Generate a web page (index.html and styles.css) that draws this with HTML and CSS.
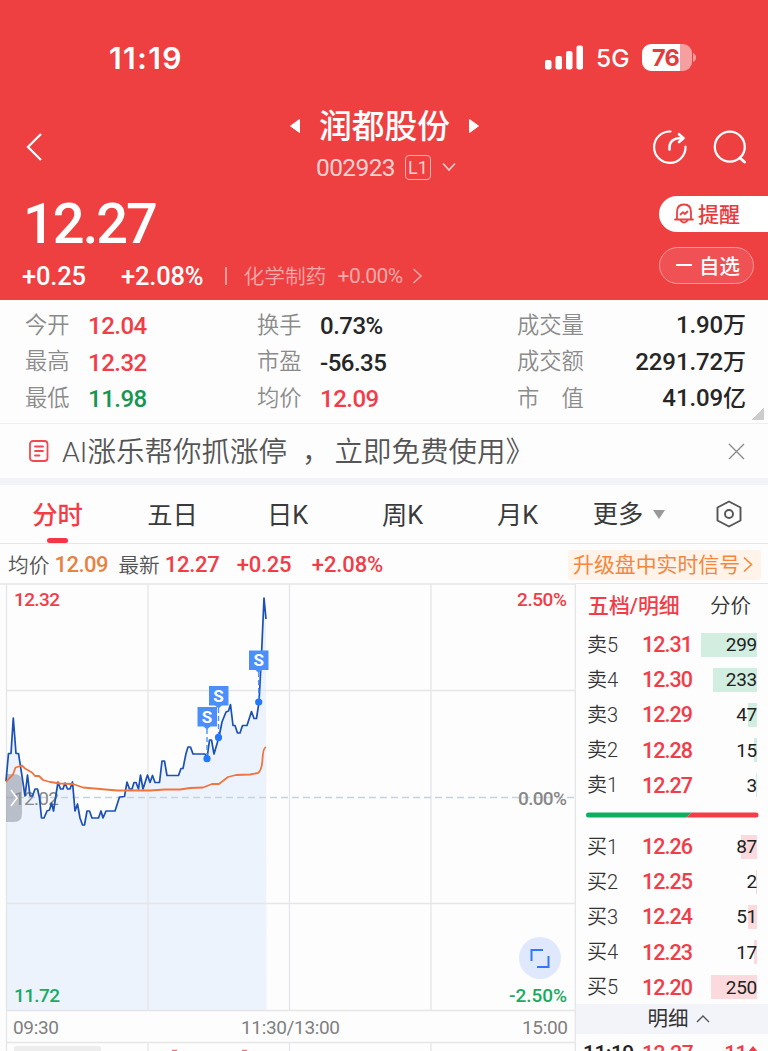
FILE: index.html
```html
<!DOCTYPE html>
<html lang="zh-CN">
<head>
<meta charset="utf-8">
<title>润都股份 002923</title>
<link rel="stylesheet" href="styles.css">
</head>
<body>
<div class="app">
  <header class="header">
    <div class="status">
      <span class="clock">11:19</span>
      <div class="status-right">
        <svg class="signal" width="38" height="25" viewBox="0 0 38 25" fill="#fff"><rect x="0" y="15" width="6.5" height="9.5" rx="2"/><rect x="10.5" y="11" width="6.5" height="13.5" rx="2"/><rect x="21" y="6" width="6.5" height="18.5" rx="2"/><rect x="31.5" y="0.500" width="6.500" height="24" rx="2"/></svg>
        <span class="net">5G</span>
        <span class="battery">76</span>
        <svg class="cap" width="3" height="9" viewBox="0 0 3 9"><path d="M0 0Q3 1.500 3 4.500T0 9Z" fill="#f59fa0"/></svg>
      </div>
    </div>
    <div class="nav">
      <svg class="back" width="18" height="30" viewBox="0 0 18 30"><path d="M16 2 3 15 16 28" fill="none" stroke="#fff" stroke-width="2.300"/></svg>
      <div class="title">
        <div class="name-row">
          <svg width="12" height="16" viewBox="0 0 12 16"><path d="M10.500 1.500v13L1.500 8Z" fill="#fff" stroke="#fff" stroke-linejoin="round"/></svg>
          <h1 class="name">润都股份</h1>
          <svg width="12" height="16" viewBox="0 0 12 16"><path d="M1.500 1.500v13L10.500 8Z" fill="#fff" stroke="#fff" stroke-linejoin="round"/></svg>
        </div>
        <div class="code-row">
          <span class="code">002923</span><span class="level">L1</span>
          <svg width="14" height="10" viewBox="0 0 14 10"><path d="M1 1.500 7 8 13 1.500" fill="none" stroke="#fbd0d0" stroke-width="1.600"/></svg>
        </div>
      </div>
      <div class="nav-icons">
        <svg width="36" height="36" viewBox="0 0 36 36" fill="none" stroke="#fff" stroke-width="2.200" stroke-linecap="round" stroke-linejoin="round"><path d="M18.500 2.500A15.700 15.700 0 1 0 33.500 17.500"/><path stroke-width="2.600" d="M17.500 20.500C17 12.500 21 9 30.500 9M27 5.200 31.500 9.200 27 13"/></svg>
        <svg width="36" height="36" viewBox="0 0 36 36" fill="none" stroke="#fff" stroke-width="2.300" stroke-linecap="round"><circle cx="17.800" cy="17.700" r="15"/><path stroke-width="3" d="m28 29 4.500 4"/></svg>
      </div>
    </div>
    <div class="quote">
      <div class="quote-main">
        <div class="price">12.27</div>
        <div class="change-row">
          <span class="chg">+0.25</span><span class="pct">+2.08%</span><i class="sep"></i>
          <span class="sector">化学制药</span><span class="sector-pct">+0.00%</span>
          <svg width="11" height="16" viewBox="0 0 11 16"><path d="m1.500 1 7.500 7-7.500 7" fill="none" stroke="#f8a8a8" stroke-width="1.500"/></svg>
        </div>
      </div>
      <div class="actions">
        <div class="remind">
          <svg width="20" height="21" viewBox="0 0 20 21" fill="none" stroke="#ee3f41" stroke-width="1.800" stroke-linejoin="round" stroke-linecap="round"><path d="M3 16V9Q3 1.500 10 1.500T17 9v7M1 16.500h18M6.500 17.500Q10 21.500 13.500 17.500M6.500 11.500l2.500-2.300 1.800 1.800 2.700-2.500"/></svg>提醒
        </div>
        <div class="watch"><i class="minus"></i>自选</div>
      </div>
    </div>
  </header>

  <section class="stats">
    <div class="stat"><span>今开</span><b class="red">12.04</b></div>
    <div class="stat"><span>换手</span><b>0.73%</b></div>
    <div class="stat wide"><span>成交量</span><b>1.90<em>万</em></b></div>
    <div class="stat"><span>最高</span><b class="red">12.32</b></div>
    <div class="stat"><span>市盈</span><b>-56.35</b></div>
    <div class="stat wide"><span>成交额</span><b>2291.72<em>万</em></b></div>
    <div class="stat"><span>最低</span><b class="green">11.98</b></div>
    <div class="stat"><span>均价</span><b class="red">12.09</b></div>
    <div class="stat wide"><span>市　值</span><b>41.09<em>亿</em></b></div>
    <i class="corner"></i>
  </section>

  <section class="promo">
    <svg width="20" height="22" viewBox="0 0 20 22" fill="none" stroke="#f2484f" stroke-width="1.800" stroke-linecap="round"><rect x="1" y="1" width="17.500" height="20" rx="3"/><path d="M6 6.500h8M6 11h8M6 15.500h4.500"/></svg>
    <span class="promo-text">AI涨乐帮你抓涨停<span class="comma">，</span>立即免费使用》</span>
    <svg width="17" height="17" viewBox="0 0 17 17"><path d="m1 1 15 15M16 1 1 16" stroke="#8c8c8c" stroke-width="1.400"/></svg>
  </section>

  <nav class="tabs">
    <span class="tab active">分时</span><span class="tab">五日</span><span class="tab">日K</span><span class="tab">周K</span><span class="tab">月K</span>
    <span class="tab more">更多<i class="caret"></i></span>
    <svg class="gear" width="26" height="28" viewBox="0 0 26 28" fill="none" stroke="#555" stroke-width="1.900" stroke-linejoin="round"><path d="M13 1.500 24.500 7.500v13L13 26.500 1.500 20.500v-13Z"/><circle cx="13" cy="14" r="4"/></svg>
  </nav>

  <div class="ticker">
    <span class="t-label">均价</span><span class="t-avg">12.09</span>
    <span class="t-label second">最新</span><span class="t-num">12.27</span><span class="t-num t-chg">+0.25</span><span class="t-num t-pct">+2.08%</span>
    <span class="upgrade">升级盘中实时信号<svg width="10" height="17" viewBox="0 0 10 17"><path d="m1 1.500 7.500 7L1 15.500" fill="none" stroke="#f6863c" stroke-width="1.600"/></svg></span>
  </div>

  <main class="market">
    <svg class="chart" width="576" height="468" viewBox="0 583 576 468">
      <path fill="#ecf3fd" d="M6 781 8.500 753.500H11L13.300 718 16 753.500H18.500L22 776 25 796 27.500 775 30 796H32.500L35 789H37.500L39.500 798 41.500 818H44L47 811 49.500 810 51.500 803 53.500 811 58 782 60.500 789H63L65 783 67.500 789H70L72.500 782 75 811 77.500 804 80 818 82.500 825H84.500L87 811H89.500L92 818H98.500L101 811 103 818 106 811H115L119.500 797 124.500 796.500 127 782 129.500 789H132L134 782.500H136L138.500 789 140.500 775 143 789 147.500 775 150 782.500 152.500 775.500 155 782.500H159.500L162 761H164.500L167 775.500H178.500L181 768.500H183L186 753.500 188 747H190.500L193 754H205L207 758.500 209.500 740H211.500L214 754 219 737 222 722 226 712 228.500 711 230.500 704.500 233 725.500H235L237.500 733H240L242.500 725.500H247L251.500 711.500 254 718.500H256.500L259 702 261.500 655 264 598 266 619 266.500 1010H6Z"/>
      <g stroke="#e5e6e8" stroke-width="1.300" fill="none"><path d="M0 584H768M6.500 584V1051M148 584V1010M289.500 584V1010M431 584V1010M6 690.500H575M6 903.500H575M6 1010.500H575M6 1042.500H575M148 1043V1051M289.500 1043V1051M431 1043V1051M575.300 584V1051"/></g>
      <path d="M6 797.500H575" stroke="#c7d3dc" stroke-width="1.300" stroke-dasharray="7 4"/>
      <g class="axis" fill="#888"><text x="14" y="804.500" textLength="45">12.02</text><text class="bold" x="518" y="804.500" textLength="49">0.00%</text></g>
      <path d="M6 774H14Q22 774 22 782V814Q22 822 14 822H6Z" fill="#858b98" fill-opacity=".5"/>
      <path d="m11 790 6 8-6 8" fill="none" stroke="#fff" stroke-width="1.500"/>
      <path fill="none" stroke="#1b50b5" stroke-width="1.700" stroke-linejoin="round" d="M6 781 8.500 753.500H11L13.300 718 16 753.500H18.500L22 776 25 796 27.500 775 30 796H32.500L35 789H37.500L39.500 798 41.500 818H44L47 811 49.500 810 51.500 803 53.500 811 58 782 60.500 789H63L65 783 67.500 789H70L72.500 782 75 811 77.500 804 80 818 82.500 825H84.500L87 811H89.500L92 818H98.500L101 811 103 818 106 811H115L119.500 797 124.500 796.500 127 782 129.500 789H132L134 782.500H136L138.500 789 140.500 775 143 789 147.500 775 150 782.500 152.500 775.500 155 782.500H159.500L162 761H164.500L167 775.500H178.500L181 768.500H183L186 753.500 188 747H190.500L193 754H205L207 758.500 209.500 740H211.500L214 754 219 737 222 722 226 712 228.500 711 230.500 704.500 233 725.500H235L237.500 733H240L242.500 725.500H247L251.500 711.500 254 718.500H256.500L259 702 261.500 655 264 598 266 619"/>
      <path fill="none" stroke="#f0743f" stroke-width="1.800" stroke-linejoin="round" d="M6 782 9.500 778 13 774.500 15.500 767.500 22 765.500 25 768.500 32 772.500 35 776H39L43 780 50 782 60 783.500 73 784 83 787.500 100 789 117 790.500H150L165 789.500H180L190 788 203 787.500 212 784H219L228 777 236 775 250 774.500 258 773 Q262 770 262.500 759 T266 747"/>
      <g stroke="#4c91f7" stroke-width="1.400" stroke-dasharray="5 3"><path d="M207 729V758M218.500 708V737M258.700 672V702"/></g>
      <g fill="#2478fb"><circle cx="207" cy="758.700" r="3.600"/><circle cx="218.500" cy="737.400" r="3.600"/><circle cx="258.700" cy="702" r="3.600"/></g>
      <g fill="#4c8ffa"><path d="M197.500 707H217V726.500H210.500L207 729.500 203.500 726.500H197.500ZM209 686H228.500V705.500H222L218.500 708.500 215 705.500H209ZM249 650.500H268.500V670H262L258.700 673 255.500 670H249Z"/></g>
      <g class="mark" fill="#fff"><text x="207" y="722.500">S</text><text x="218.500" y="701.500">S</text><text x="258.700" y="666">S</text></g>
      <g class="axis bold"><text x="14" y="606" fill="#f23c48" textLength="46">12.32</text><text x="517" y="606" fill="#f23c48" textLength="50">2.50%</text><text x="14" y="1002" fill="#18ab61" textLength="46">11.72</text><text x="509" y="1002" fill="#18ab61" textLength="58">-2.50%</text></g>
      <g class="axis" fill="#808080"><text x="13" y="1033.500" textLength="46">09:30</text><text x="241" y="1033.500" textLength="99">11:30/13:00</text><text x="522" y="1033.500" textLength="46">15:00</text></g>
      <circle cx="540" cy="958" r="21" fill="#dfe8fd"/>
      <path d="M531.500 961V950H543M548.500 956V967H537" fill="none" stroke="#3179f4" stroke-width="2"/>
      <path d="M14 1051V1048Q14 1046 17 1046H98Q101 1046 101 1048V1051Z" fill="#ededee"/>
      <path d="M172 1050.500H177M242 1050.500H247" stroke="#f4727b" stroke-width="1.500"/>
    </svg>

    <aside class="book">
      <div class="book-tabs"><b>五档/明细</b><span>分价</span></div>
      <div class="levels sell">
        <div class="level-row"><span>卖5</span><b>12.31</b><em><i style="width:56px"></i><u>299</u></em></div>
        <div class="level-row"><span>卖4</span><b>12.30</b><em><i style="width:44px"></i><u>233</u></em></div>
        <div class="level-row"><span>卖3</span><b>12.29</b><em><i style="width:9px"></i><u>47</u></em></div>
        <div class="level-row"><span>卖2</span><b>12.28</b><em><i style="width:3px"></i><u>15</u></em></div>
        <div class="level-row"><span>卖1</span><b>12.27</b><em><i style="width:1px"></i><u>3</u></em></div>
      </div>
      <svg class="ratio" width="173" height="6" viewBox="0 0 173 6"><path d="M2.500 .500H106L100 5.500H2.500A2.500 2.500 0 0 1 2.500 .500" fill="#0caf5f"/><path d="M106 .500H170A2.500 2.500 0 0 1 170 5.500H100Z" fill="#f63c49"/></svg>
      <div class="levels buy">
        <div class="level-row"><span>买1</span><b>12.26</b><em><i style="width:16px"></i><u>87</u></em></div>
        <div class="level-row"><span>买2</span><b>12.25</b><em><i style="width:1px"></i><u>2</u></em></div>
        <div class="level-row"><span>买3</span><b>12.24</b><em><i style="width:9px"></i><u>51</u></em></div>
        <div class="level-row"><span>买4</span><b>12.23</b><em><i style="width:3px"></i><u>17</u></em></div>
        <div class="level-row"><span>买5</span><b>12.20</b><em><i style="width:46px"></i><u>250</u></em></div>
      </div>
      <div class="detail">明细<svg width="14" height="9" viewBox="0 0 14 9"><path d="m1 8 6-6 6 6" fill="none" stroke="#555" stroke-width="1.400"/></svg></div>
      <div class="trade"><span>11:19</span><b>12.27</b><b class="vol">11<svg width="10" height="14" viewBox="0 0 10 14"><path d="M5 0l5 6H7v8H3V6H0Z" fill="#f23c48"/></svg></b></div>
    </aside>
  </main>
</div>
</body>
</html>
```
FILE: styles.css
```css
* { box-sizing: border-box; }
body { margin: 0; background: #fdfdfe; }
svg { display: block; flex: none; }
i, em { font-style: normal; }
.app {
  width: 768px; height: 1051px; overflow: hidden;
  font-family: Roboto, "Noto Sans CJK SC", sans-serif;
  color: #333; white-space: nowrap;
}

/* Header */
.header { height: 300px; background: #ee3f41; color: #fff; }
.status { height: 100px; padding: 15px 72px 0 109px; display: flex; align-items: center; justify-content: space-between; }
.clock { font: 600 30px/30px Inter, sans-serif; letter-spacing: 1.400px; }
.status-right { display: flex; align-items: center; }
.net { margin-left: 13px; font: 500 24.500px/28px Inter, sans-serif; width: 34px; }
.battery {
  margin-left: 12px; width: 50px; height: 27px; border-radius: 9px;
  background: linear-gradient(90deg, #fff 76%, #f59fa0 76%);
  color: #e43b3e; font: 700 23.500px/27px Inter, sans-serif; padding-left: 10px; letter-spacing: -0.800px;
}
.cap { margin-left: 1px; }
.nav { height: 90px; display: grid; grid-template-columns: 1fr auto 1fr; padding: 0 20px 0 25px; }
.back { margin-top: 32px; }
.title { display: flex; flex-direction: column; align-items: center; position: relative; left: -2px; }
.name-row { display: flex; align-items: center; gap: 18px; height: 50px; padding-top: 2px; }
.name { margin: 0; font: 500 32.800px/44px "Noto Sans CJK SC", sans-serif; padding-bottom: 4px; }
.code-row { display: flex; align-items: center; height: 34px; color: #fbd0d0; margin-left: 3px; }
.code { font-size: 24.500px; letter-spacing: -0.600px; }
.level { margin: 0 11px 0 10px; width: 26px; height: 25px; border: 1.300px solid #f8b0b0; border-radius: 4px; font-size: 18px; line-height: 23px; text-align: center; }
.nav-icons { display: flex; justify-content: flex-end; gap: 24px; padding-top: 29px; }
.quote { height: 110px; display: flex; justify-content: space-between; }
.quote-main { padding-left: 22px; }
.price { font-size: 56px; font-weight: 500; line-height: 68px; height: 69px; letter-spacing: -2px; padding-left: 1px; }
.change-row { display: flex; align-items: center; height: 34px; }
.chg, .pct { font-size: 25.500px; font-weight: 500; letter-spacing: -0.200px; }
.chg { width: 99px; }
.pct { width: 104px; letter-spacing: -0.200px; }
.sep { width: 1.500px; height: 18px; background: #f79a9b; margin-right: 17px; }
.sector { font-size: 20.700px; color: #f8aaaa; width: 94px; font-weight: 350; padding-bottom: 2px; }
.sector-pct { font-size: 21px; color: #f8aaaa; width: 74px; letter-spacing: -0.500px; }
.actions { width: 109px; padding-top: 6px; }
.remind { height: 36px; background: #fff; color: #e8393d; border-radius: 18px 0 0 18px; display: flex; align-items: center; gap: 4px; padding: 0 0 2px 15px; font: 500 21px/34px "Noto Sans CJK SC", sans-serif; }
.watch { height: 37px; width: 95px; margin-top: 15px; border: 1.300px solid #f89a9b; border-radius: 19px; background: #ef5154; display: flex; align-items: center; gap: 7px; padding: 0 0 1px 16px; font: 500 20.500px/32px "Noto Sans CJK SC", sans-serif; }
.minus { width: 16px; height: 2px; background: #fff; }

/* Key figures */
.stats { height: 124px; padding: 8px 22px 0 25px; border-bottom: 1.500px solid #eeeff1; display: grid; grid-template-columns: 232px 260px 229px; grid-auto-rows: 36.600px; position: relative; }
.stat { display: flex; align-items: center; }
.stat span { font-size: 22.300px; font-weight: 350; color: #8b8b8b; width: 63px; line-height: 33px; padding-bottom: 2px; }
.stat:not(.wide) span { flex: none; }
.stat b { font-size: 24px; font-weight: 500; color: #262626; letter-spacing: -0.500px; }
.stat em { font-weight: 500; font-size: 23px; line-height: 30px; }
.stat.wide { justify-content: space-between; }
.stat.wide b { letter-spacing: -0.100px; }
.stat .red { color: #f23c48; }
.stat .green { color: #169650; }
.corner { position: absolute; right: 4px; bottom: 3px; width: 13px; height: 13px; background: linear-gradient(135deg, transparent 50%, #ccc 50%); }

/* Promotion strip */
.promo { height: 54px; display: flex; align-items: center; padding: 0 23px 0 29px; }
.promo-text { flex: 1; margin-left: 13px; font-size: 28.500px; font-weight: 350; color: #555; line-height: 42px; padding-top: 4px; }
.comma { margin: 0 4px 0 15px; }

/* Period tabs */
.tabs { border-top: 7px solid #f1f3f8; height: 66px; border-bottom: 1.500px solid #e5e6e8; display: flex; }
.tab { width: 115px; height: 58px; text-align: center; font-size: 25.300px; line-height: 61px; color: #3a3a3a; }
.tab.active { color: #f23c48; font-weight: 500; position: relative; }
.tab.active::after { content: ""; position: absolute; left: 47px; bottom: 0; width: 21px; height: 5px; border-radius: 3px; background: #f63644; }
.tab.more { width: 110px; display: flex; align-items: center; justify-content: center; gap: 10px; margin-left: -1px; }
.caret { border: 6.500px solid transparent; border-top: 9px solid #999; border-bottom: 0; }
.gear { margin: 15px 0 0 32px; }

/* Quote strip above the chart */
.ticker { height: 39px; display: flex; align-items: center; padding: 2px 7px 0 8px; }
.t-label { font-size: 20.700px; font-weight: 350; color: #555; padding-bottom: 2px; }
.t-label.second { margin-left: 11px; }
.t-avg { color: #e78242; font-size: 22px; font-weight: 500; letter-spacing: -0.500px; margin-left: 5px; width: 53px; }
.t-num { color: #f23c48; font-size: 22px; font-weight: 500; letter-spacing: -0.300px; }
.second + .t-num { margin-left: 5px; width: 72px; }
.t-chg { width: 75px; }
.t-pct { letter-spacing: -0.100px; }
.upgrade { margin-left: auto; height: 30px; width: 193px; background: #fff3ea; border-radius: 3px; color: #f6863c; font-size: 20.900px; line-height: 28px; display: flex; align-items: center; gap: 3px; padding-left: 5px; }

/* Chart and order book */
.market { display: flex; height: 468px; }
.axis { font-family: Roboto, sans-serif; font-size: 19px; }
.bold { font-weight: 500; }
.mark { font: 700 17px Roboto, sans-serif; text-anchor: middle; }
.book { width: 192px; border-top: 1.500px solid #e5e6e8; }
.book-tabs { height: 43px; display: flex; justify-content: space-between; align-items: center; padding: 0 17px 0 12px; font-size: 20.500px; line-height: 40px; font-weight: 350; }
.book-tabs b { color: #f23c48; font-weight: 500; font-size: 20.900px; }
.level-row { height: 35.200px; display: flex; align-items: center; padding-left: 11px; }
.level-row span { font-size: 20px; font-weight: 350; width: 55px; line-height: 30px; }
.level-row b { color: #f23c48; font-size: 21.500px; font-weight: 500; width: 58px; letter-spacing: -1px; }
.level-row em { width: 57px; height: 24px; display: grid; justify-items: end; align-items: center; }
.level-row i { grid-area: 1 / 1; height: 24px; }
.level-row u { grid-area: 1 / 1; text-decoration: none; font-size: 19px; font-weight: 450; color: #222; letter-spacing: -0.300px; }
.sell i { background: #d1eee0; }
.buy i { background: #fcd9dc; }
.ratio { margin: 9px 0 11px 10px; }
.detail { height: 30px; background: #f3f4f9; display: flex; justify-content: center; align-items: center; gap: 7px; font-size: 20.500px; line-height: 30px; padding-left: 13px; margin-top: -1px; }
.trade { display: flex; padding: 4px 10px 0 7px; font-size: 21px; font-weight: 500; line-height: 30px; }
.trade span { width: 59px; color: #222; letter-spacing: -0.500px; }
.trade b { color: #f23c48; font-weight: 500; letter-spacing: -0.500px; }
.vol { margin-left: auto; display: flex; align-items: center; gap: 1px; }
```
